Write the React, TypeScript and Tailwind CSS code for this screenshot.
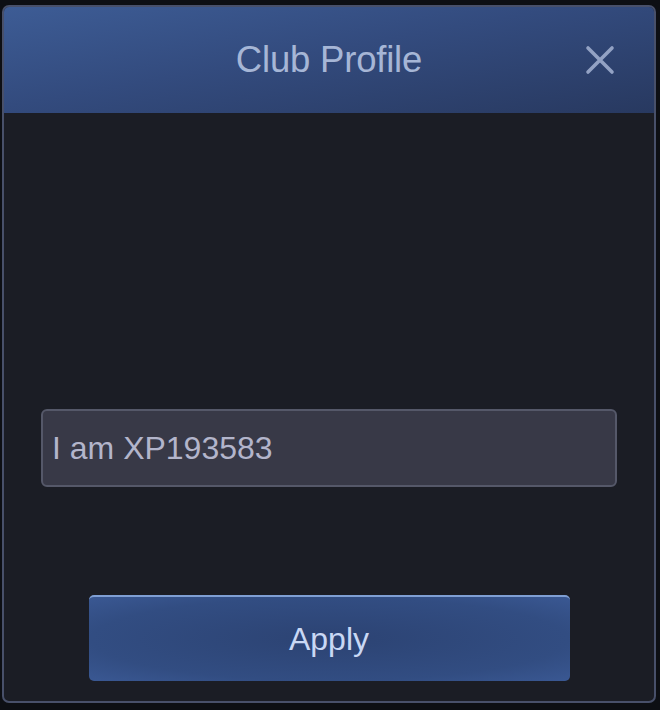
import { useState } from 'react';

export default function App() {
  const [motto, setMotto] = useState('I am XP193583');

  return (
    <div className="h-[710px] w-[660px] bg-[#0d0f14] px-[2px] pt-[5px] pb-[7px] font-['Liberation_Sans',Arial,sans-serif]">
      <div className="flex h-full w-[654px] flex-col overflow-hidden rounded-[7px] border-2 border-[#48506a] bg-[#1b1d25]">
        {/* header */}
        <div className="relative flex h-[106px] shrink-0 items-center justify-center bg-[linear-gradient(170deg,#3d5c95_0%,#334b7e_45%,#283960_100%)]">
          <span className="pt-[1px] text-[36.5px] tracking-[-0.2px] text-[#a6b6d6]">Club Profile</span>
          <button className="absolute right-[39px] top-[38px] text-[#93a2c4]" aria-label="close">
            <svg width="30" height="30" viewBox="0 0 30 30" fill="none" stroke="currentColor" strokeWidth="3.6" strokeLinecap="round">
              <path d="M3 3 L27 27 M27 3 L3 27" />
            </svg>
          </button>
        </div>

        {/* body */}
        <div className="flex flex-1 flex-col px-[37px]">
          <div className="mt-[296px] flex h-[78px] items-center rounded-[6px] border-2 border-[#555869] bg-[#383947] px-[9px]">
            <input
              value={motto}
              onChange={e => setMotto(e.target.value)}
              className="w-full bg-transparent text-[32px] text-[#b3b5cb] outline-none"
            />
          </div>

          <button className="mx-auto mt-[108px] flex h-[86px] w-[481px] items-center justify-center rounded-[5px] border-t-2 border-[#7f9fd4] bg-[radial-gradient(ellipse_at_center,#2c4373_0%,#324d82_70%,#3a5893_100%)] text-[32px] text-[#c9d8f4]">
            Apply
          </button>
        </div>
      </div>
    </div>
  );
}
